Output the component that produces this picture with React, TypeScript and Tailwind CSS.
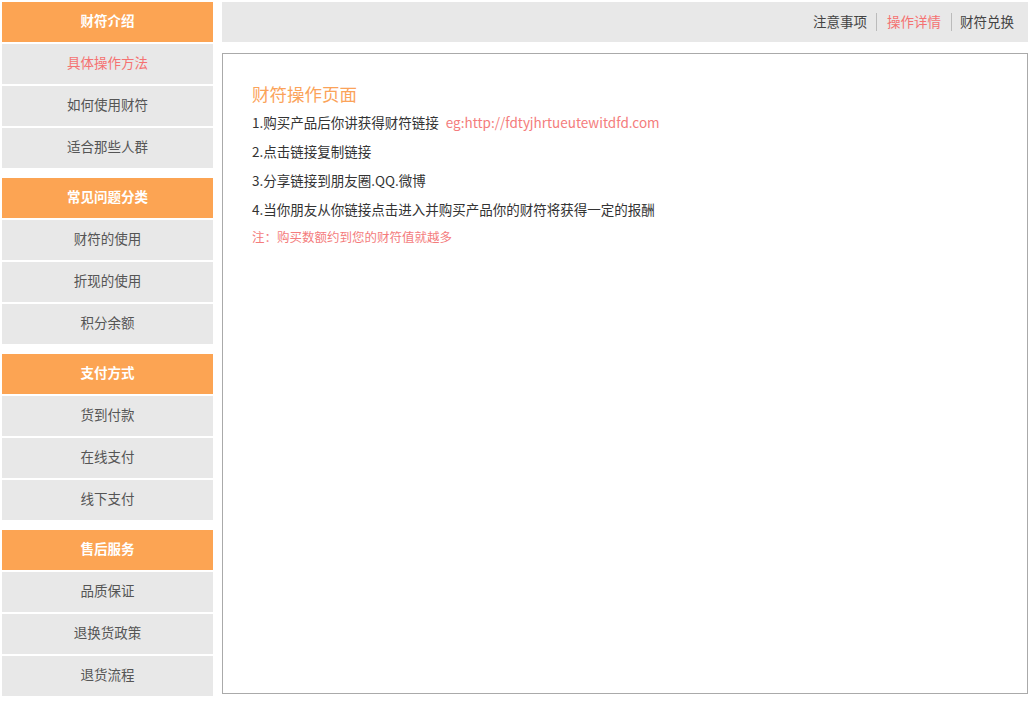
const groups = [
  { title: "财符介绍", items: ["具体操作方法", "如何使用财符", "适合那些人群"] },
  { title: "常见问题分类", items: ["财符的使用", "折现的使用", "积分余额"] },
  { title: "支付方式", items: ["货到付款", "在线支付", "线下支付"] },
  { title: "售后服务", items: ["品质保证", "退换货政策", "退货流程"] },
];

const font = { fontFamily: '"Noto Sans CJK SC", "Noto Sans", sans-serif' };

export default function App() {
  return (
    <div className="flex gap-[9px] p-[2px] bg-white w-[1036px] h-[702px]" style={font}>
      {/* Sidebar */}
      <div className="flex flex-col gap-[10px] w-[211px]">
        {groups.map((g) => (
          <div key={g.title} className="flex flex-col gap-[2px]">
            <div className="h-[40px] flex items-center justify-center pb-[3px] bg-[#fca453] text-white text-[13.5px] font-bold">
              {g.title}
            </div>
            {g.items.map((it) => (
              <div
                key={it}
                className={`h-[40px] flex items-center justify-center pb-[3px] bg-[#e8e8e8] text-[13.5px] ${
                  it === "具体操作方法" ? "text-[#f57272]" : "text-[#555]"
                }`}
              >
                {it}
              </div>
            ))}
          </div>
        ))}
      </div>

      {/* Main */}
      <div className="flex-1 flex flex-col gap-[11px] pr-[6px]">
        <div className="h-[40px] bg-[#e8e8e8] flex items-center justify-end pb-[1px] pr-[14px] text-[13.5px] text-[#444]">
          <span className="pr-[9px]">注意事项</span>
          <span className="h-[18px] border-l border-[#bbb]" />
          <span className="px-[10px] text-[#f57272]">操作详情</span>
          <span className="h-[18px] border-l border-[#bbb]" />
          <span className="pl-[8px]">财符兑换</span>
        </div>
        <div className="h-[641px] border border-[#aaa] pl-[29px] pt-[28px] text-[#333]">
          <div className="text-[17.5px] text-[#fba35a] leading-[24px]">财符操作页面</div>
          <div className="mt-[3px] text-[13.5px] leading-[26px]">
            1.购买产品后你讲获得财符链接
            <span className="ml-[7px] text-[#f47c7c]">eg:http://fdtyjhrtueutewitdfd.com</span>
          </div>
          <div className="mt-[3px] text-[13.5px] leading-[26px]">2.点击链接复制链接</div>
          <div className="mt-[3px] text-[13.5px] leading-[26px]">3.分享链接到朋友圈.QQ.微博</div>
          <div className="mt-[3px] text-[13.5px] leading-[26px]">4.当你朋友从你链接点击进入并购买产品你的财符将获得一定的报酬</div>
          <div className="mt-[2px] text-[12.5px] leading-[26px] text-[#f47c7c]">注：购买数额约到您的财符值就越多</div>
        </div>
      </div>
    </div>
  );
}
